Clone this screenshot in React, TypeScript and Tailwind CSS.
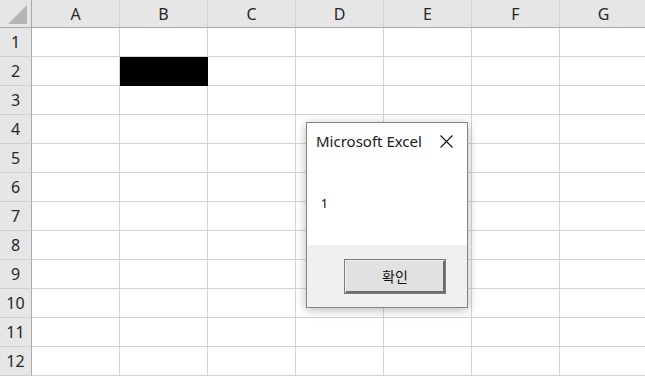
import React from 'react';

const cols = ['A', 'B', 'C', 'D', 'E', 'F', 'G'];
const rows = [1, 2, 3, 4, 5, 6, 7, 8, 9, 10, 11, 12];

const font = { fontFamily: '"Noto Sans", "Noto Sans CJK KR", sans-serif' };

const App: React.FC = () => {
  return (
    <div className="relative w-[645px] h-[376px] overflow-hidden bg-white text-[#262626]" style={font}>
      {/* column header row */}
      <div className="flex h-[28px]">
        <div className="w-[32px] shrink-0 bg-[#e6e6e6] border-r border-b border-[#ababab] relative">
          <div className="absolute left-[8px] top-[5px] w-[19px] h-[19px] bg-[#b5b5b5] [clip-path:polygon(100%_0,100%_100%,0_100%)]" />
        </div>
        {cols.map((c) => (
          <div
            key={c}
            className="w-[88px] shrink-0 bg-[#e6e6e6] border-r border-b border-r-[#d0d0d0] border-b-[#ababab] flex items-center justify-center text-[16px] leading-none"
          >
            {c}
          </div>
        ))}
      </div>

      {rows.map((r) => (
        <div key={r} className="flex h-[29px]">
          <div className="w-[32px] shrink-0 bg-[#e6e6e6] border-r border-b border-r-[#ababab] border-b-[#d0d0d0] flex items-center justify-center text-[16px] leading-none">
            {r}
          </div>
          {cols.map((c) => (
            <div
              key={c}
              className={
                r === 2 && c === 'B'
                  ? 'w-[88px] shrink-0 bg-black border-r border-b border-black'
                  : 'w-[88px] shrink-0 border-r border-b border-[#d4d4d4]'
              }
            />
          ))}
        </div>
      ))}

      {/* message box */}
      <div className="absolute left-[306px] top-[122px] w-[162px] h-[186px] border border-[#858585] bg-white shadow-[0_2px_10px_rgba(0,0,0,0.28)] flex flex-col">
        <div className="h-[122px] bg-white relative">
          <div className="absolute left-[9px] top-[7px] text-[15px] text-[#1a1a1a]">Microsoft Excel</div>
          <svg className="absolute left-[133px] top-[12px]" width="13" height="13" viewBox="0 0 13 13">
            <path d="M0.5 0.5 L12.5 12.5 M12.5 0.5 L0.5 12.5" stroke="#111" strokeWidth="1.1" />
          </svg>
          <div className="absolute left-[14px] top-[72px] text-[12px] text-black">1</div>
        </div>
        <div className="flex-1 bg-[#f0f0f0] pt-[15px] pl-[38px]">
          <button className="w-[100px] h-[33px] bg-[#e1e1e1] border border-t-[#f5f5f5] border-l-[#f5f5f5] border-r-[#6b6b6b] border-b-[#6b6b6b] shadow-[inset_-1px_-1px_0_#6b6b6b,0_0_0_1px_#7a7a7a] text-[14px] text-[#111] flex items-center justify-center">
            확인
          </button>
        </div>
      </div>
    </div>
  );
};

export default App;
